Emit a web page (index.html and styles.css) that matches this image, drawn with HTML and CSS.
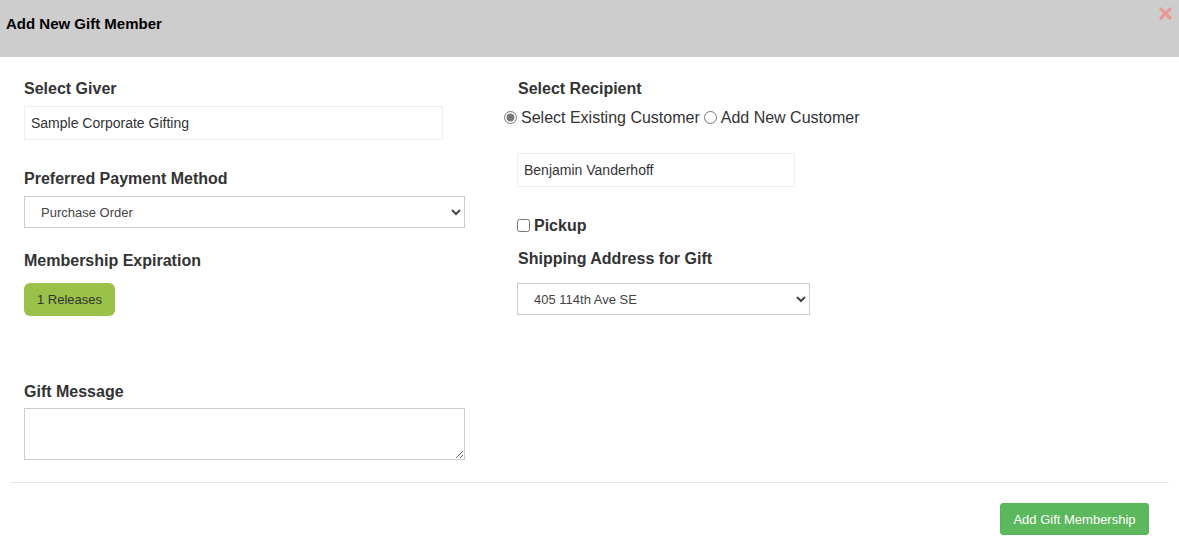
FILE: index.html
```html
<!DOCTYPE html>
<html lang="en">
<head>
    <meta charset="UTF-8">
    <meta name="viewport" content="width=device-width, initial-scale=1.0">
    <title>Add New Gift Member</title>
    <link rel="stylesheet" href="styles.css">
</head>
<body>
    <div class="modal">
        <div class="modal-header">
            <h4 class="modal-title">Add New Gift Member</h4>
            <span class="close">
                <svg width="13" height="13" viewBox="0 0 13 13">
                    <path d="M2 2 L11 11 M11 2 L2 11" stroke="#e89a9a" stroke-width="3.2" stroke-linecap="round"/>
                </svg>
            </span>
        </div>

        <div class="modal-body">
            <!-- 左侧 -->
            <div class="col col-left">
                <label class="field-label">Select Giver</label>
                <input class="text-input giver" type="text" value="Sample Corporate Gifting">

                <label class="field-label payment-label">Preferred Payment Method</label>
                <select class="select-input payment">
                    <option>Purchase Order</option>
                </select>

                <label class="field-label expire-label">Membership Expiration</label>
                <div>
                    <button class="btn-release">1 Releases</button>
                </div>

                <label class="field-label message-label">Gift Message</label>
                <textarea class="message"></textarea>
            </div>

            <!-- 右侧 -->
            <div class="col col-right">
                <label class="field-label">Select Recipient</label>
                <div class="radio-row">
                    <label><input type="radio" name="recipient" checked>Select Existing Customer</label>
                    <label class="radio-new"><input type="radio" name="recipient">Add New Customer</label>
                </div>
                <input class="text-input recipient" type="text" value="Benjamin Vanderhoff">

                <label class="pickup"><input type="checkbox">Pickup</label>

                <label class="field-label shipping-label">Shipping Address for Gift</label>
                <select class="select-input shipping">
                    <option>405 114th Ave SE</option>
                </select>
            </div>
        </div>

        <div class="modal-footer">
            <button class="btn-add">Add Gift Membership</button>
        </div>
    </div>
</body>
</html>
```

FILE: styles.css
```css
body {
    margin: 0;
    font-family: "Liberation Sans", Arial, sans-serif;
    color: #333;
    background-color: #fff;
}

.modal-header {
    height: 57px;
    background-color: #cdcdcd;
    display: flex;
    justify-content: space-between;
    align-items: flex-start;
    padding: 0 7px 0 6px;
}

.modal-title {
    margin: 15px 0 0;
    font-size: 15px;
    font-weight: bold;
    color: #000;
}

.close {
    margin-top: 6px;
}

.modal-body {
    display: flex;
    padding: 22px 0 0 24px;
}

.col {
    display: flex;
    flex-direction: column;
    align-items: flex-start;
}

.col-left {
    width: 441px;
}

.col-right {
    margin-left: 52px;
}

.field-label {
    display: block;
    font-size: 16px;
    line-height: 20px;
    font-weight: bold;
    color: #333;
}

.col-right > .field-label {
    margin-left: 1px;
}

.text-input {
    margin: 7px 0 0;
    height: 34px;
    box-sizing: border-box;
    border: 1px solid #eee;
    padding: 0 6px;
    font-family: "Liberation Sans", Arial, sans-serif;
    font-size: 14px;
    color: #333;
    outline: none;
}

.giver {
    width: 419px;
}

.recipient {
    width: 278px;
    margin-top: 25px;
}

.select-input {
    margin-top: 7px;
    height: 32px;
    box-sizing: border-box;
    border: 1px solid #ccc;
    border-radius: 0;
    background-color: #fff;
    padding: 0 12px;
    font-family: "Liberation Sans", Arial, sans-serif;
    font-size: 13px;
    color: #444;
}

.payment {
    width: 441px;
}

.shipping {
    width: 293px;
    margin-top: 14px;
}

.payment-label {
    margin-top: 29px;
}

.expire-label {
    margin-top: 23px;
}

.btn-release {
    margin-top: 12px;
    width: 91px;
    height: 33px;
    border: none;
    border-radius: 6px;
    background-color: #9ac148;
    font-family: "Liberation Sans", Arial, sans-serif;
    font-size: 13px;
    color: #333;
}

.message-label {
    margin-top: 66px;
}

.message {
    margin-top: 6px;
    width: 441px;
    height: 52px;
    box-sizing: border-box;
    border: 1px solid #ccc;
    resize: vertical;
}

.radio-row {
    margin: 9px 0 0 -14px;
    height: 20px;
    line-height: 20px;
    font-size: 16px;
    color: #333;
    display: flex;
}

.radio-row input {
    margin: 0 4px 0 1px;
    vertical-align: -1px;
    accent-color: #777;
}

.radio-new {
    margin-left: 3px;
}

.pickup {
    margin-top: 29px;
    font-size: 16px;
    line-height: 20px;
    font-weight: bold;
    color: #333;
}

.pickup input {
    margin: 0 4px 0 0;
    vertical-align: -1px;
}

.shipping-label {
    margin-top: 13px;
}

.modal-footer {
    margin: 22px 10px 0;
    border-top: 1px solid #e5e5e5;
    display: flex;
    justify-content: flex-end;
    padding: 20px 20px 0 0;
}

.btn-add {
    width: 149px;
    height: 32px;
    border: 1px solid #59b359;
    border-radius: 3px;
    background-color: #5cb85c;
    font-family: "Liberation Sans", Arial, sans-serif;
    font-size: 13px;
    color: #fff;
}
```
